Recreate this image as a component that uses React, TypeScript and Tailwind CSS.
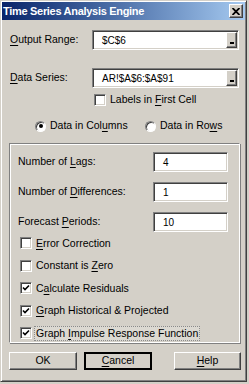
import type { ReactNode } from 'react';

const FONT = { fontFamily: '"Liberation Sans", Arial, sans-serif' };

function U({ children }: { children: ReactNode }) {
  return <span className="underline underline-offset-[1.5px]">{children}</span>;
}

function TextBox({ value, withRef = false, className = '' }: { value: string; withRef?: boolean; className?: string }) {
  return (
    <div
      className={`flex h-[20px] items-center border border-t-[#808080] border-l-[#808080] border-b-white border-r-white bg-white shadow-[inset_1px_1px_0_#404040,inset_-1px_-1px_0_#d4d0c8] ${className}`}
    >
      <span className="flex-1 pl-[9px] text-[10px] text-black">{value}</span>
      {withRef && (
        <div className="mr-[1px] flex h-[16px] w-[11px] items-end justify-center border border-t-white border-l-white border-b-[#404040] border-r-[#404040] bg-[#d4d0c8] pb-[3px] shadow-[inset_-1px_-1px_0_#808080]">
          <div className="h-[2px] w-[4px] bg-black" />
        </div>
      )}
    </div>
  );
}

function CheckBox({ checked }: { checked: boolean }) {
  return (
    <div className="flex h-[12px] w-[12px] shrink-0 items-center justify-center border border-t-[#808080] border-l-[#808080] border-b-white border-r-white bg-white shadow-[inset_1px_1px_0_#404040,inset_-1px_-1px_0_#d4d0c8]">
      {checked && (
        <svg width="8" height="8" viewBox="0 0 8 8">
          <path d="M1 3.5 L3 5.5 L7 1.5" stroke="#000" strokeWidth="1.6" fill="none" />
        </svg>
      )}
    </div>
  );
}

function Radio({ checked }: { checked: boolean }) {
  return (
    <div className="flex h-[11px] w-[11px] shrink-0 items-center justify-center rounded-full border border-t-[#808080] border-l-[#808080] border-b-white border-r-white bg-white shadow-[inset_1px_1px_0_#404040]">
      {checked && <div className="h-[4px] w-[4px] rounded-full bg-black" />}
    </div>
  );
}

function Button({ children, isDefault = false, className = '' }: { children: ReactNode; isDefault?: boolean; className?: string }) {
  return (
    <div
      className={`flex h-[18px] items-center justify-center bg-[#d4d0c8] text-[10.5px] text-black ${
        isDefault
          ? 'border-2 border-black'
          : 'border border-t-white border-l-white border-b-[#404040] border-r-[#404040] shadow-[inset_-1px_-1px_0_#808080]'
      } ${className}`}
    >
      {children}
    </div>
  );
}

const options: { label: ReactNode; checked: boolean; focused?: boolean }[] = [
  { label: <><U>E</U>rror Correction</>, checked: false },
  { label: <>Constant is <U>Z</U>ero</>, checked: false },
  { label: <>C<U>a</U>lculate Residuals</>, checked: true },
  { label: <><U>G</U>raph Historical &amp; Projected</>, checked: true },
  { label: <>Graph <U>I</U>mpulse Response Function</>, checked: true, focused: true },
];

export default function App() {
  return (
    <div className="h-[384px] w-[249px] overflow-hidden bg-[#d4d0c8]" style={FONT}>
      <div className="flex h-[382px] w-[247px] flex-col border border-t-[#d4d0c8] border-l-[#d4d0c8] border-b-[#404040] border-r-[#404040] bg-[#d4d0c8] p-[1px] shadow-[inset_1px_1px_0_#ffffff,inset_-1px_-1px_0_#808080]">
        {/* title bar */}
        <div className="flex h-[18px] items-center justify-between bg-gradient-to-r from-[#0a246a] to-[#a6caf0] pl-[1px] pr-[2px]">
          <span className="text-[11px] font-bold tracking-[-0.3px] text-white">Time Series Analysis Engine</span>
          <div className="flex h-[14px] w-[14px] items-center justify-center border border-t-white border-l-white border-b-[#404040] border-r-[#404040] bg-[#d4d0c8] shadow-[inset_-1px_-1px_0_#808080]">
            <svg width="8" height="7" viewBox="0 0 8 7">
              <path d="M0.5 0 L7.5 7 M7.5 0 L0.5 7" stroke="#000" strokeWidth="1.8" />
            </svg>
          </div>
        </div>

        <div className="flex flex-col text-[10.5px] text-black">
          <div className="mt-[10px] flex items-center pl-[8px]">
            <span className="w-[82px]"><U>O</U>utput Range:</span>
            <TextBox value="$C$6" withRef className="w-[147px]" />
          </div>
          <div className="mt-[18px] flex items-center pl-[8px]">
            <span className="w-[82px]"><U>D</U>ata Series:</span>
            <TextBox value="AR!$A$6:$A$91" withRef className="w-[147px]" />
          </div>
          <div className="mt-[6px] flex h-[12px] items-center gap-[4px] pl-[92px]">
            <CheckBox checked={false} />
            <span>Labels in <U>F</U>irst Cell</span>
          </div>
          <div className="mt-[13px] flex h-[14px] items-center pl-[33px]">
            <Radio checked />
            <span className="ml-[4px] w-[95px]">Data in Col<U>u</U>mns</span>
            <Radio checked={false} />
            <span className="ml-[4px]">Data in Ro<U>w</U>s</span>
          </div>

          {/* group box */}
          <div className="ml-[7px] mt-[10px] flex h-[200px] w-[231px] flex-col border border-t-[#808080] border-l-[#808080] border-b-white border-r-white shadow-[inset_1px_1px_0_#ffffff,1px_1px_0_#808080]">
            <div className="flex flex-col gap-[10px] pl-[8px] pr-[11px] pt-[8px]">
              <div className="flex items-center justify-between">
                <span>Number of <U>L</U>ags:</span>
                <TextBox value="4" className="w-[75px]" />
              </div>
              <div className="flex items-center justify-between">
                <span>Number of <U>D</U>ifferences:</span>
                <TextBox value="1" className="w-[75px]" />
              </div>
              <div className="flex items-center justify-between">
                <span>Forecast <U>P</U>eriods:</span>
                <TextBox value="10" className="w-[75px]" />
              </div>
            </div>
            <div className="flex flex-col pl-[10px]">
              {options.map((o, i) => (
                <div key={i} className="flex h-[22.5px] items-center gap-[2px]">
                  <CheckBox checked={o.checked} />
                  <span
                    className={`px-[1px] leading-[13px] ${
                      o.focused ? 'border border-dotted border-[#8a8a8a] bg-[#dcd9d2]' : 'border border-transparent'
                    }`}
                  >
                    {o.label}
                  </span>
                </div>
              ))}
            </div>
          </div>

          <div className="mt-[9px] flex pl-[7px]">
            <Button className="w-[68px]">OK</Button>
            <Button isDefault className="ml-[7px] w-[68px]">
              <span><U>C</U>ancel</span>
            </Button>
            <Button className="ml-[22px] w-[67px]">
              <span><U>H</U>elp</span>
            </Button>
          </div>
        </div>
      </div>
    </div>
  );
}
